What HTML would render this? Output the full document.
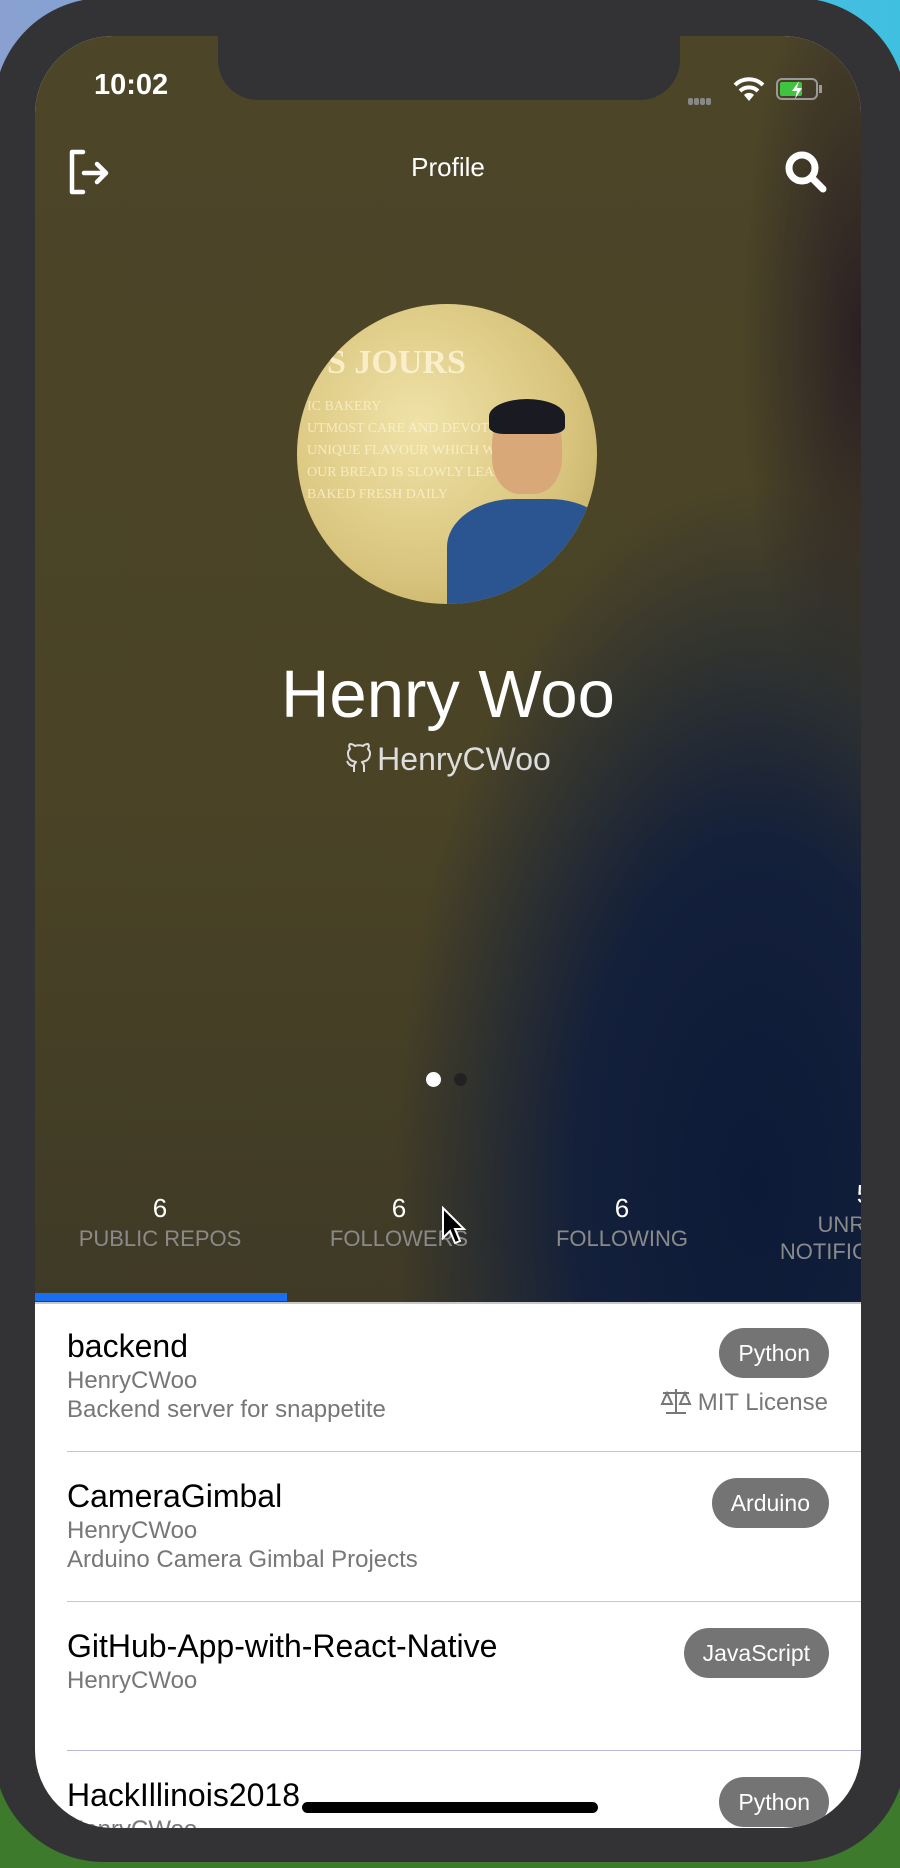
<!DOCTYPE html>
<html><head><meta charset="utf-8"><style>
*{margin:0;padding:0;box-sizing:border-box}
html,body{width:900px;height:1868px;overflow:hidden;background:#3a6a3a;font-family:"Liberation Sans",sans-serif}
.outer{position:absolute;left:0;top:0;width:900px;height:1868px;background:linear-gradient(90deg,#8aa0d0,#5fb0e0 50%,#40c0e0);}
.outer2{position:absolute;left:0;top:1500px;width:900px;height:368px;background:#3d7a2c}
.frame{position:absolute;left:-6px;top:-2px;width:912px;height:1864px;background:#333336;border-radius:110px}
.screen{position:absolute;left:35px;top:36px;width:826px;height:1792px;border-radius:78px;overflow:hidden;background:#fff}
.hero{position:absolute;left:0;top:0;width:826px;height:1266px;
background:radial-gradient(ellipse 360px 700px at 720px 1150px,#0c1a38 0%,#14203a 50%,rgba(20,30,50,0) 100%),
radial-gradient(ellipse 120px 400px at 826px 300px,#2a2024 0%,rgba(40,30,30,0) 100%),
linear-gradient(180deg,#4c4528 0%,#4a4326 60%,#3f3a26 100%)}
.notch{position:absolute;left:183px;top:-40px;width:462px;height:104px;background:#333336;border-radius:0 0 40px 40px}
.w{color:#fff;position:absolute}
.row{position:absolute;left:32px;right:0;border-bottom:1px solid #c8c8c0}
.t{position:absolute;left:0;font-size:32px;color:#000}
.u{position:absolute;left:0;font-size:24px;color:#777}
.pill{position:absolute;right:32px;background:#747474;color:#fff;border-radius:25px;height:50px;line-height:50px;padding:0 19px;font-size:23px}
</style></head><body>
<div class="outer"></div><div class="outer2"></div>
<div class="frame"></div>
<div class="screen">
 <div class="hero">
  <div class="w" style="left:59px;top:33px;font-size:29px;font-weight:bold">10:02</div>
  <div class="w" style="left:653px;top:56px;width:24px;height:8px;">
   <span style="display:inline-block;width:5px;height:7px;background:#888;border-radius:2px;margin-right:1px"></span><span style="display:inline-block;width:5px;height:7px;background:#888;border-radius:2px;margin-right:1px"></span><span style="display:inline-block;width:5px;height:7px;background:#888;border-radius:2px;margin-right:1px"></span><span style="display:inline-block;width:5px;height:7px;background:#888;border-radius:2px"></span></div>
  <svg class="w" style="left:697px;top:38px" width="34" height="30" viewBox="0 0 34 30"><path d="M3 11 A20 20 0 0 1 31 11" stroke="#fff" stroke-width="4" fill="none"/><path d="M8 17 A13 13 0 0 1 26 17" stroke="#fff" stroke-width="4" fill="none"/><path d="M17 27 L12 21 A7 7 0 0 1 22 21 Z" fill="#fff"/></svg>
  <div class="w" style="left:741px;top:42px;width:42px;height:22px;border:2px solid #999;border-radius:6px;padding:2px"><div style="width:22px;height:14px;background:#3ec43e;border-radius:2px"></div>
   <svg style="position:absolute;left:12px;top:1px" width="14" height="18" viewBox="0 0 14 18"><path d="M9 0 L2 10 H7 L5 18 L12 7 H7 Z" fill="#fff"/></svg></div>
  <div class="w" style="left:784px;top:49px;width:3px;height:8px;background:#999"></div>
  <svg class="w" style="left:33px;top:113px" width="44" height="46" viewBox="0 0 44 46"><path d="M15 3 H4 V43 H15" stroke="#fff" stroke-width="4.5" fill="none" stroke-linecap="round" stroke-linejoin="round"/><path d="M16 24 H38 M29 15 L38 24 L29 33" stroke="#fff" stroke-width="4.5" fill="none" stroke-linecap="round" stroke-linejoin="round"/></svg>
  <div class="w" style="left:0;width:826px;text-align:center;top:116px;font-size:26px">Profile</div>
  <svg class="w" style="left:748px;top:113px" width="46" height="46" viewBox="0 0 46 46"><circle cx="19" cy="19" r="13" stroke="#fff" stroke-width="7" fill="none"/><path d="M29 29 L40 40" stroke="#fff" stroke-width="7" stroke-linecap="round"/></svg>
  <div style="position:absolute;left:262px;top:268px;width:300px;height:300px;border-radius:50%;overflow:hidden;background:radial-gradient(circle at 40% 40%,#f0e2a8,#d8c47c 60%,#b8a458)">
   <div style="position:absolute;left:30px;top:40px;color:#fff6d8;font:bold 34px 'Liberation Serif',serif;opacity:.8">S JOURS</div>
   <div style="position:absolute;left:10px;top:92px;color:#fff6d8;font:14px 'Liberation Serif',serif;opacity:.7;line-height:22px">IC BAKERY<br>UTMOST CARE AND DEVOTION<br>UNIQUE FLAVOUR WHICH WAS<br>OUR BREAD IS SLOWLY LEAVENED<br>BAKED FRESH DAILY</div>
   <div style="position:absolute;left:195px;top:100px;width:70px;height:90px;border-radius:45% 45% 40% 40%;background:#d8a878"></div>
   <div style="position:absolute;left:192px;top:95px;width:76px;height:35px;border-radius:50% 50% 20% 20%;background:#1a1a22"></div>
   <div style="position:absolute;left:150px;top:195px;width:170px;height:120px;border-radius:40% 40% 0 0;background:#2a5590"></div>
  </div>
  <div class="w" style="left:0;width:826px;text-align:center;top:620px;font-size:67px">Henry Woo</div>
  <div class="w" style="left:0;width:826px;text-align:center;top:705px;font-size:32px;color:#ddd">
   <svg width="28" height="32" viewBox="0 0 28 32" style="vertical-align:-4px;margin-right:4px"><path d="M9 30 V24 C4 24 3 21 2 19 M19 30 V24 C19 22 18 21 17 20 C22 19 25 17 25 11 C25 9 24 8 23 7 C24 5 24 3 23 2 C21 2 19 3 18 4 C16 3 12 3 10 4 C9 3 7 2 5 2 C4 3 4 5 5 7 C4 8 3 9 3 11 C3 17 6 19 11 20 C10 21 9 22 9 24" stroke="#ddd" stroke-width="2" fill="none" stroke-linejoin="round"/></svg>HenryCWoo</div>
  <div style="position:absolute;left:391px;top:1036px;width:15px;height:15px;border-radius:50%;background:#fff"></div>
  <div style="position:absolute;left:419px;top:1037px;width:13px;height:13px;border-radius:50%;background:#222"></div>
  <div class="w" style="left:25px;width:200px;text-align:center;top:1157px;font-size:26px">6</div>
  <div class="w" style="left:25px;width:200px;text-align:center;top:1190px;font-size:22px;color:#8a8a8a">PUBLIC REPOS</div>
  <div class="w" style="left:264px;width:200px;text-align:center;top:1157px;font-size:26px">6</div>
  <div class="w" style="left:264px;width:200px;text-align:center;top:1190px;font-size:22px;color:#8a8a8a">FOLLOWERS</div>
  <div class="w" style="left:487px;width:200px;text-align:center;top:1157px;font-size:26px">6</div>
  <div class="w" style="left:487px;width:200px;text-align:center;top:1190px;font-size:22px;color:#8a8a8a">FOLLOWING</div>
  <div class="w" style="left:729px;width:200px;text-align:center;top:1143px;font-size:26px">5</div>
  <div class="w" style="left:729px;width:200px;text-align:center;top:1175px;font-size:22px;color:#8a8a8a;line-height:27px">UNREAD<br>NOTIFICATIONS</div>
  <svg class="w" style="left:406px;top:1170px" width="26" height="40" viewBox="0 0 26 40"><path d="M2 2 V32 L9 25 L14 37 L19 35 L14 23 L23 23 Z" fill="#000" stroke="#fff" stroke-width="2"/></svg>
  <div style="position:absolute;left:0;top:1257px;width:252px;height:8px;background:#1a6ef0"></div>
 </div>
 <div style="position:absolute;left:0;top:1266px;width:826px;height:2px;background:#c8c8c8"></div>
 <div class="row" style="top:1266px;height:150px">
  <div class="t" style="top:26px">backend</div>
  <div class="u" style="top:65px">HenryCWoo</div>
  <div class="u" style="top:94px">Backend server for snappetite</div>
  <div class="pill" style="top:26px">Python</div>
  <div style="position:absolute;right:33px;top:85px;font-size:24px;color:#777"><svg width="32" height="28" viewBox="0 0 32 28" style="vertical-align:-5px;margin-right:6px"><path d="M16 2 V26 M6 26 H26 M3 6 H29 M7 6 L2 17 H12 Z M25 6 L20 17 H30 Z" stroke="#777" stroke-width="2" fill="none"/></svg>MIT License</div>
 </div>
 <div class="row" style="top:1416px;height:150px">
  <div class="t" style="top:26px">CameraGimbal</div>
  <div class="u" style="top:65px">HenryCWoo</div>
  <div class="u" style="top:94px">Arduino Camera Gimbal Projects</div>
  <div class="pill" style="top:26px">Arduino</div>
 </div>
 <div class="row" style="top:1566px;height:149px;border-color:#b8b8d8">
  <div class="t" style="top:26px">GitHub-App-with-React-Native</div>
  <div class="u" style="top:65px">HenryCWoo</div>
  <div class="pill" style="top:26px">JavaScript</div>
 </div>
 <div class="row" style="top:1715px;height:100px;border:none">
  <div class="t" style="top:26px">HackIllinois2018</div>
  <div class="u" style="top:65px">HenryCWoo</div>
  <div class="pill" style="top:26px">Python</div>
 </div>
 <div style="position:absolute;left:267px;top:1766px;width:296px;height:11px;border-radius:6px;background:#000"></div>
</div>
<div class="notch" style="left:218px;top:-4px;height:104px"></div>
</body></html>
